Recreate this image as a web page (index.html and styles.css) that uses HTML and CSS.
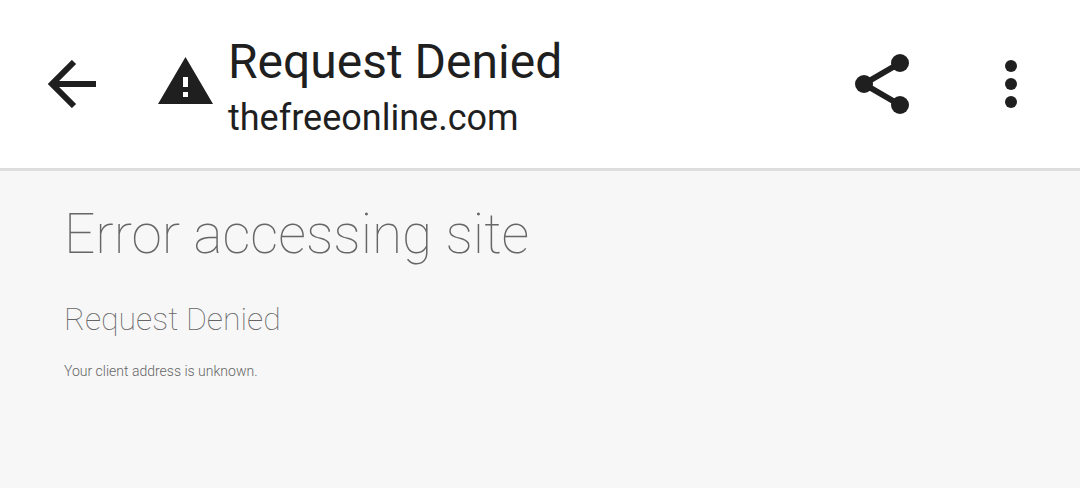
FILE: index.html
```
<!DOCTYPE html>
<html lang="en">
<head>
  <meta charset="UTF-8">
  <title>Request Denied</title>
  <meta name="viewport" content="width=device-width, initial-scale=1.0">
  <link rel="stylesheet" href="styles.css">
</head>
<body>

<header class="toolbar">
  <button class="icon-btn" aria-label="Back">
    <svg width="48" height="48" viewBox="0 0 48 48">
      <path d="M48 24H6M26 2L4 24l22 22" fill="none" stroke="currentColor" stroke-width="6"/>
    </svg>
  </button>
  <svg class="warning" width="55" height="47" viewBox="0 0 55 47" aria-hidden="true">
    <path fill="currentColor" fill-rule="evenodd" d="M27.5 0L55 47H0zM25 20v10h5V20zM25 35v5h5v-5z"/>
  </svg>
  <div class="page-info">
    <div class="page-title">Request Denied</div>
    <div class="page-host">thefreeonline.com</div>
  </div>
  <button class="icon-btn" aria-label="Share">
    <svg width="54" height="60" viewBox="0 0 54 60">
      <path d="M45 9L9 30l36 21" fill="none" stroke="currentColor" stroke-width="6"/>
      <g fill="currentColor">
        <circle cx="45" cy="9" r="9"/>
        <circle cx="9" cy="30" r="9"/>
        <circle cx="45" cy="51" r="9"/>
      </g>
    </svg>
  </button>
  <button class="icon-btn menu-btn" aria-label="More options">
    <svg width="12" height="48" viewBox="0 0 12 48" fill="currentColor">
      <circle cx="6" cy="6" r="6"/>
      <circle cx="6" cy="24" r="6"/>
      <circle cx="6" cy="42" r="6"/>
    </svg>
  </button>
</header>

<main class="content">
  <h1>Error accessing site</h1>
  <h2>Request Denied</h2>
  <p>Your client address is unknown.</p>
</main>

</body>
</html>
```
FILE: styles.css
```
* { box-sizing: border-box; }
body { margin: 0; font-family: Roboto, sans-serif; background: #f7f7f7; color: #1f1f1f; }
.toolbar {
  display: flex; align-items: center; padding: 24px 63px 24px 48px;
  background: #fff; border-bottom: 3px solid #dedede;
}
.icon-btn { padding: 0; border: 0; background: none; color: inherit; }
.icon-btn svg { display: block; }
.warning { margin: 0 15px 7px 62px; }
.page-info { flex: 1; padding-top: 8px; }
.page-title { font-size: 48px; line-height: 60px; }
.page-host { font-size: 36px; line-height: 52px; }
.menu-btn { margin-left: 96px; }
.content { padding: 31px 64px; color: #666; font-weight: 100; }
h1, h2, p { margin: 0; font-weight: inherit; }
h1 { font-size: 55px; line-height: 64px; }
h2 { margin-top: 33px; font-size: 32px; line-height: 40px; }
p { margin-top: 22px; font-size: 14px; line-height: 20px; font-weight: 300; }
```
